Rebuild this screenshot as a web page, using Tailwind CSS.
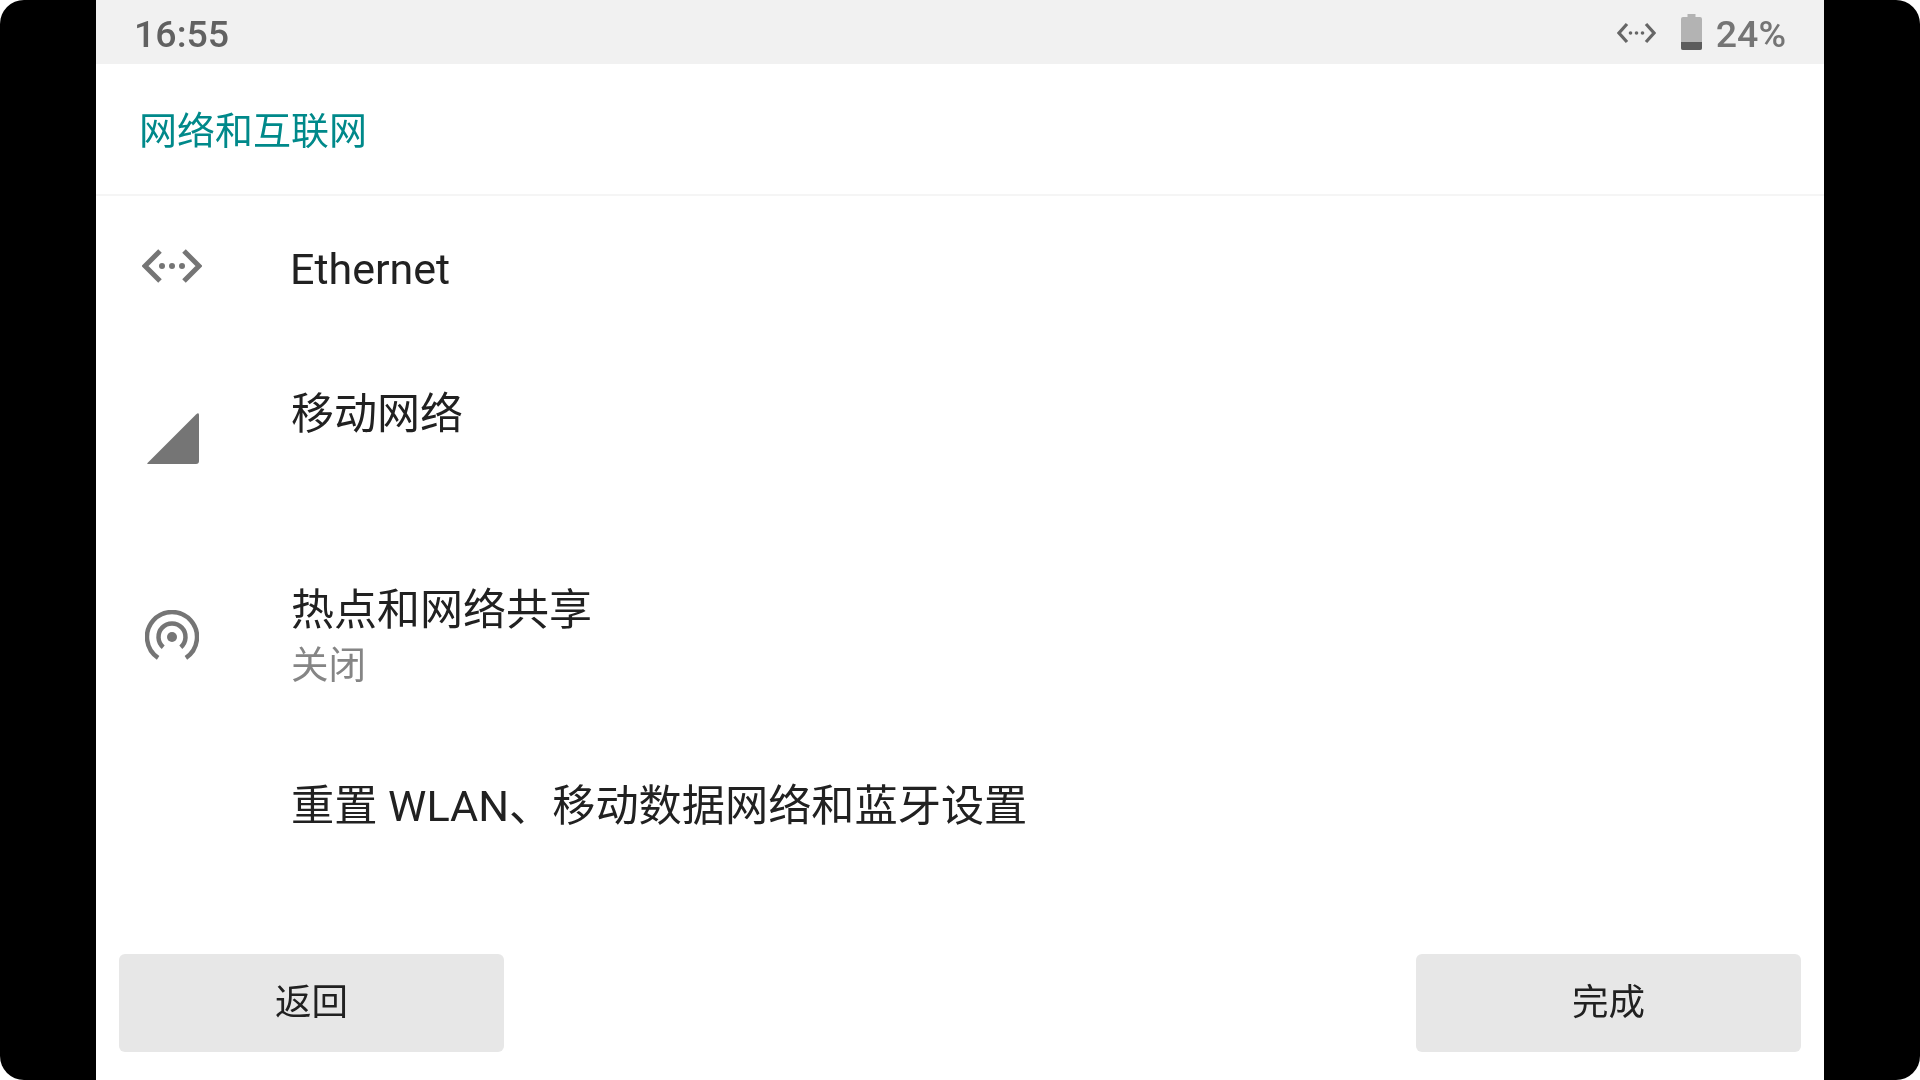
<!doctype html>
<html lang="zh-CN">
<head>
<meta charset="utf-8">
<script src="https://cdn.jsdelivr.net/npm/@tailwindcss/browser@4"></script>
</head>
<body class="bg-white font-['Roboto','Noto_Sans_CJK_SC',sans-serif]">
<div class="w-[1920px] h-[1080px] bg-black rounded-[24px] overflow-hidden flex justify-center">
  <div class="w-[1728px] h-full bg-white flex flex-col blur-[0.5px]">
    <div class="h-[64px] bg-[#f1f1f1] flex items-center justify-between pl-[38px] pr-[38px]">
      <span class="text-[37.5px] font-medium text-[#616161] leading-none mt-[6px]">16:55</span>
      <div class="flex items-center">
        <svg class="w-[39px] h-[22px] mt-[1px]" viewBox="0 0 39 22" fill="none" stroke="#666" stroke-width="3.2">
          <path d="M10 2 L2 11 L10 20 M29 2 L37 11 L29 20"/>
          <g fill="#666" stroke="none"><circle cx="13.5" cy="11" r="1.8"/><circle cx="19.5" cy="11" r="1.8"/><circle cx="25.5" cy="11" r="1.8"/></g>
        </svg>
        <svg class="w-[21px] h-[36px] ml-[25px]" viewBox="0 0 21 36">
          <path d="M6.5 0 H14.5 V3 H19 Q21 3 21 5 V34 Q21 36 19 36 H2 Q0 36 0 34 V5 Q0 3 2 3 H6.5 Z" fill="#b3b3b3"/>
          <path d="M0 28 H21 V34 Q21 36 19 36 H2 Q0 36 0 34 Z" fill="#5c5c5c"/>
        </svg>
        <span class="text-[37.5px] font-medium text-[#757575] leading-none ml-[14px] mt-[6px]">24%</span>
      </div>
    </div>
    <div class="h-[132px] border-b-2 border-[#f5f5f5] flex items-center pl-[43px] pt-[4px]">
      <span class="text-[38px] leading-none text-[#00898a]">网络和互联网</span>
    </div>
    <div class="flex-1 flex flex-col">
      <div class="h-[144px] flex items-center">
        <div class="w-[195px] pl-[46px]">
          <svg class="w-[60px] h-[36px] -mt-[4px]" viewBox="0 0 60 36" fill="none" stroke="#757575" stroke-width="5">
            <path d="M18 3 L3 18 L18 33 M42 3 L57 18 L42 33"/>
            <g fill="#757575" stroke="none"><circle cx="20" cy="18" r="3"/><circle cx="30" cy="18" r="3"/><circle cx="40" cy="18" r="3"/></g>
          </svg>
        </div>
        <span class="text-[43px] leading-none text-[#212121] mt-[2px] -ml-[1px]">Ethernet</span>
      </div>
      <div class="h-[196px] flex">
        <div class="w-[195px] pl-[51px] pt-[72px]">
          <svg class="w-[52px] h-[52px]" viewBox="0 0 52 52"><path d="M0.5 51 L49 2.5 Q52 0 52 3 V49 Q52 52 49 52 H2 Q-0.5 52 0.5 51 Z" fill="#757575"/></svg>
        </div>
        <span class="text-[43px] leading-none text-[#212121] pt-[53px]">移动网络</span>
      </div>
      <div class="h-[197px] flex items-center">
        <div class="w-[195px] pl-[49px]">
          <svg class="w-[54px] h-[50px]" viewBox="0 0 54 50" fill="none" stroke="#757575" stroke-width="4.5">
            <path d="M13.1 47.8 A25 25 0 1 1 40.9 47.8"/>
            <path d="M18.2 37.2 A13.5 13.5 0 1 1 35.8 37.2"/>
            <circle cx="27" cy="27" r="5" fill="#757575" stroke="none"/>
          </svg>
        </div>
        <div class="flex flex-col mt-[6px]">
          <span class="text-[43px] leading-[56px] text-[#212121]">热点和网络共享</span>
          <span class="text-[37.5px] leading-[56px] text-[#858585] -mt-[1px]">关闭</span>
        </div>
      </div>
      <div class="h-[144px] flex items-center pl-[195px]">
        <span class="text-[43.2px] leading-none text-[#212121] mt-[4px]">重置 WLAN、移动数据网络和蓝牙设置</span>
      </div>
    </div>
    <div class="h-[126px] pl-[23px] pr-[23px] flex justify-between">
      <button class="w-[385px] h-[98px] bg-[#e7e7e7] rounded-[6px] text-[36.5px] text-[#212121] pt-[1px]">返回</button>
      <button class="w-[385px] h-[98px] bg-[#e7e7e7] rounded-[6px] text-[36.5px] text-[#212121] pt-[1px]">完成</button>
    </div>
  </div>
</div>
</body>
</html>
